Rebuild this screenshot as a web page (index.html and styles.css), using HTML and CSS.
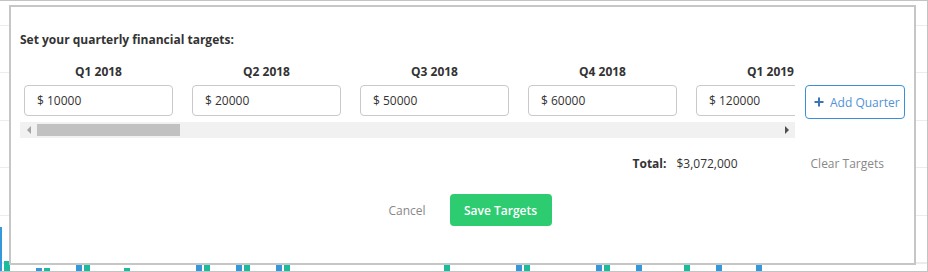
FILE: index.html
```html
<!DOCTYPE html>
<html lang="en">
<head>
    <meta charset="UTF-8">
    <meta name="viewport" content="width=device-width, initial-scale=1.0">
    <title>Quarterly Targets</title>
    <link rel="stylesheet" href="styles.css">
</head>
<body>
    <div class="frame">
        <!-- chart behind the dialog -->
        <div class="chart-grid"></div>
        <div class="chart">
            <div class="bar-group"><span class="bar blue" style="height:44px"></span><span class="bar green" style="height:10px"></span></div>
            <div class="bar-group"><span class="bar blue" style="height:3px"></span><span class="bar green" style="height:3px"></span></div>
            <div class="bar-group"><span class="bar blue" style="height:40px"></span><span class="bar green" style="height:30px"></span></div>
            <div class="bar-group"><span class="bar blue" style="height:0"></span><span class="bar green" style="height:3px"></span></div>
            <div class="bar-group"></div>
            <div class="bar-group"><span class="bar blue" style="height:50px"></span><span class="bar green" style="height:35px"></span></div>
            <div class="bar-group"><span class="bar blue" style="height:30px"></span><span class="bar green" style="height:45px"></span></div>
            <div class="bar-group"><span class="bar blue" style="height:25px"></span><span class="bar green" style="height:20px"></span></div>
            <div class="bar-group"></div>
            <div class="bar-group"></div>
            <div class="bar-group"></div>
            <div class="bar-group"><span class="bar blue" style="height:0"></span><span class="bar green" style="height:30px"></span></div>
            <div class="bar-group"></div>
            <div class="bar-group"><span class="bar blue" style="height:40px"></span><span class="bar green" style="height:25px"></span></div>
            <div class="bar-group"></div>
            <div class="bar-group"><span class="bar blue" style="height:35px"></span><span class="bar green" style="height:20px"></span></div>
            <div class="bar-group"><span class="bar blue" style="height:20px"></span><span class="bar green" style="height:0"></span></div>
            <div class="bar-group"><span class="bar blue" style="height:0"></span><span class="bar green" style="height:25px"></span></div>
            <div class="bar-group"><span class="bar blue" style="height:30px"></span><span class="bar green" style="height:0"></span></div>
            <div class="bar-group"><span class="bar blue" style="height:22px"></span><span class="bar green" style="height:0"></span></div>
        </div>

        <div class="modal">
            <div class="modal-title">Set your quarterly financial targets:</div>

            <div class="quarters-row">
                <div class="quarters-scroll">
                    <div class="quarters">
                        <div class="quarter">
                            <div class="quarter-label">Q1 2018</div>
                            <input class="quarter-input" type="text" value="$ 10000">
                        </div>
                        <div class="quarter">
                            <div class="quarter-label">Q2 2018</div>
                            <input class="quarter-input" type="text" value="$ 20000">
                        </div>
                        <div class="quarter">
                            <div class="quarter-label">Q3 2018</div>
                            <input class="quarter-input" type="text" value="$ 50000">
                        </div>
                        <div class="quarter">
                            <div class="quarter-label">Q4 2018</div>
                            <input class="quarter-input" type="text" value="$ 60000">
                        </div>
                        <div class="quarter">
                            <div class="quarter-label">Q1 2019</div>
                            <input class="quarter-input" type="text" value="$ 120000">
                        </div>
                    </div>
                    <div class="scrollbar">
                        <span class="scroll-btn"><span class="arrow-left"></span></span>
                        <span class="scroll-track"><span class="scroll-thumb"></span></span>
                        <span class="scroll-btn"><span class="arrow-right"></span></span>
                    </div>
                </div>
                <button class="btn-add">
                    <svg width="10" height="10" viewBox="0 0 10 10"><path d="M5 0.5V9.5M0.5 5H9.5" stroke="#3d74b8" stroke-width="2"/></svg>
                    Add Quarter
                </button>
            </div>

            <div class="total-row">
                <span class="total-label">Total:</span>
                <span class="total-value">$3,072,000</span>
                <a class="link-clear">Clear Targets</a>
            </div>

            <div class="modal-footer">
                <a class="link-cancel">Cancel</a>
                <button class="btn-save">Save Targets</button>
            </div>
        </div>
    </div>
</body>
</html>
```

FILE: styles.css
```css
body {
    margin: 0;
    font-family: "Open Sans", Arial, sans-serif;
    color: #333;
    background: white;
}
.frame {
    position: relative;
    width: 928px;
    height: 272px;
    box-sizing: border-box;
    border-top: 1px solid #c3c3c3;
    border-right: 1px solid #c3c3c3;
    border-bottom: 1px solid #c3c3c3;
    overflow: hidden;
    background: white;
}
.chart-grid {
    position: absolute;
    top: 0;
    left: 0;
    right: 0;
    bottom: 0;
    background: repeating-linear-gradient(to bottom, transparent 0, transparent 24px, #ececec 24px, #ececec 25px, transparent 25px, transparent 47.5px);
}
.chart {
    position: absolute;
    left: -4px;
    bottom: 0;
    height: 100%;
    display: flex;
    align-items: flex-end;
}
.bar-group {
    width: 40px;
    display: flex;
    align-items: flex-end;
    gap: 2px;
}
.bar {
    width: 6px;
    display: block;
}
.bar.blue { background: #3498db; }
.bar.green { background: #1abc9c; }

.modal {
    position: absolute;
    top: 4px;
    left: 9px;
    width: 907px;
    height: 260px;
    box-sizing: border-box;
    border: 2px solid #c6c6c6;
    background: white;
    padding: 24px 0 0 9px;
}
.modal-title {
    font-size: 12px;
    font-weight: 700;
    line-height: 17px;
    margin-bottom: 15px;
}
.quarters-row {
    display: flex;
    align-items: flex-start;
}
.quarters-scroll {
    width: 775px;
    overflow: hidden;
}
.quarters {
    display: flex;
    gap: 19px;
    padding: 0 0 6px 4px;
}
.quarter {
    flex: 0 0 149px;
}
.quarter-label {
    font-size: 12px;
    font-weight: 700;
    line-height: 18px;
    text-align: center;
    margin-bottom: 4px;
}
.quarter-input {
    display: block;
    width: 149px;
    height: 31px;
    box-sizing: border-box;
    border: 1px solid #c9c9c9;
    border-radius: 4px;
    padding: 0 0 0 12px;
    font-family: "Open Sans", Arial, sans-serif;
    font-size: 12px;
    color: #333;
    outline: none;
}
.scrollbar {
    display: flex;
    height: 16px;
    background: #f1f1f1;
}
.scroll-btn {
    width: 17px;
    display: flex;
    align-items: center;
    justify-content: center;
}
.arrow-left {
    width: 0;
    height: 0;
    border-top: 4px solid transparent;
    border-bottom: 4px solid transparent;
    border-right: 4px solid #a3a3a3;
}
.arrow-right {
    width: 0;
    height: 0;
    border-top: 4px solid transparent;
    border-bottom: 4px solid transparent;
    border-left: 4px solid #505050;
}
.scroll-track {
    flex: 1;
    padding: 2px 0;
}
.scroll-thumb {
    display: block;
    width: 143px;
    height: 12px;
    background: #c1c1c1;
}
.btn-add {
    margin: 22px 0 0 10px;
    height: 34px;
    width: 100px;
    box-sizing: border-box;
    border: 1px solid #3a8fd8;
    border-radius: 4px;
    background: white;
    padding: 0 0 0 8px;
    display: flex;
    align-items: center;
    gap: 6px;
    font-family: "Open Sans", Arial, sans-serif;
    font-size: 12px;
    color: #4f93d8;
    cursor: pointer;
}
.total-row {
    display: flex;
    justify-content: flex-end;
    align-items: center;
    margin-top: 17px;
    padding-right: 30px;
    font-size: 12px;
    line-height: 18px;
}
.total-label {
    font-weight: 700;
}
.total-value {
    margin-left: 10px;
}
.link-clear {
    margin-left: 73px;
    color: #888;
    cursor: pointer;
}
.modal-footer {
    display: flex;
    justify-content: center;
    align-items: center;
    gap: 24px;
    margin-top: 21px;
    padding-left: 6px;
    font-size: 12px;
}
.link-cancel {
    color: #888;
    cursor: pointer;
}
.btn-save {
    width: 102px;
    height: 32px;
    border: none;
    border-radius: 4px;
    background: #2ecc71;
    color: white;
    font-family: "Open Sans", Arial, sans-serif;
    font-size: 12px;
    font-weight: 600;
    cursor: pointer;
}
```
